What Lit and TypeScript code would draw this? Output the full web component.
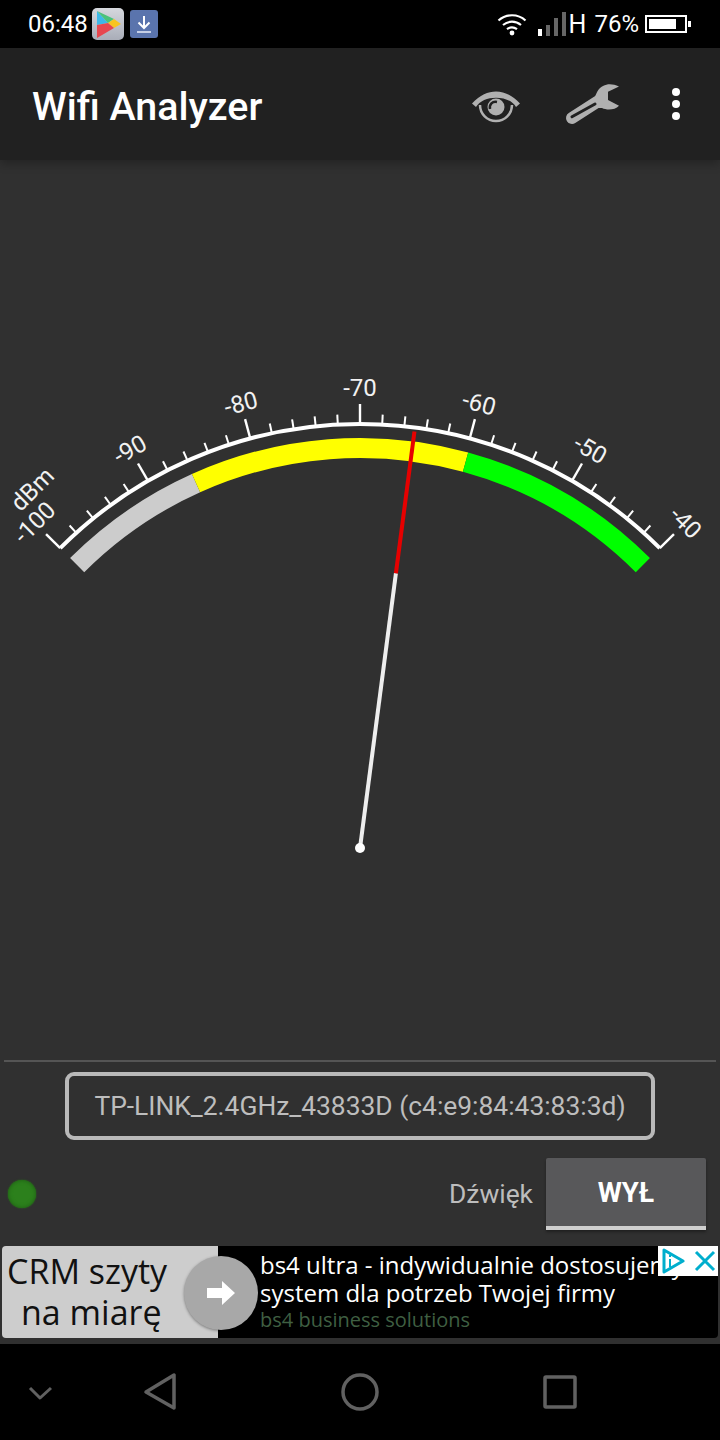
import { LitElement, html, css, svg } from "lit";
import { customElement } from "lit/decorators.js";

const CX = 360;
const CY = 848;

// polar point, deg is measured from straight up, clockwise
function pt(r: number, deg: number) {
  const a = (deg * Math.PI) / 180;
  return { x: CX + r * Math.sin(a), y: CY - r * Math.cos(a) };
}

function band(r: number, width: number, from: number, to: number, color: string) {
  const a = pt(r, from);
  const b = pt(r, to);
  return svg`<path d="M${a.x} ${a.y}A${r} ${r} 0 0 1 ${b.x} ${b.y}" fill="none" stroke=${color} stroke-width=${width}></path>`;
}

@customElement("wifi-gauge")
export class WifiGauge extends LitElement {
  static styles = css`
    :host {
      display: block;
      flex: 1;
    }
    svg {
      display: block;
    }
    text {
      font-family: Roboto, sans-serif;
      font-size: 24px;
      fill: #f2f2f2;
    }
  `;

  render() {
    const ticks = [];
    for (let dbm = -100; dbm <= -40; dbm += 2) {
      const deg = (dbm + 70) * 1.5;
      const major = dbm % 10 === 0;
      const a = pt(424, deg);
      const b = pt(major ? 444 : 434, deg);
      ticks.push(
        svg`<line x1=${a.x} y1=${a.y} x2=${b.x} y2=${b.y} stroke="#fff" stroke-width=${major ? 2.4 : 2}></line>`
      );
    }
    const labels = [-100, -90, -80, -70, -60, -50, -40].map((dbm) => {
      const deg = (dbm + 70) * 1.5;
      const p = pt(452, deg);
      return svg`<text text-anchor="middle" transform="translate(${p.x} ${p.y}) rotate(${deg})">${dbm}</text>`;
    });
    const tip = pt(420, 7.45);
    const mid = pt(277, 7.45);
    return html`
      <svg width="720" height="900" viewBox="0 160 720 900">
        ${band(400, 20, -45, -24.2, "#cccccc")}
        ${band(400, 20, -24.2, 15.3, "#ffff00")}
        ${band(400, 20, 15.3, 45, "#00ff00")}
        ${band(424, 4, -45, 45, "#ffffff")}
        ${ticks}
        ${labels}
        <text text-anchor="middle" transform="translate(38 495) rotate(-45)">dBm</text>
        <line x1=${CX} y1=${CY} x2=${mid.x} y2=${mid.y} stroke="#eeeeee" stroke-width="4"></line>
        <line x1=${mid.x} y1=${mid.y} x2=${tip.x} y2=${tip.y} stroke="#e60000" stroke-width="4"></line>
        <circle cx=${CX} cy=${CY} r="5" fill="#fff"></circle>
      </svg>
    `;
  }
}

@customElement("app-root")
export class AppRoot extends LitElement {
  static styles = css`
    :host {
      display: flex;
      flex-direction: column;
      width: 720px;
      height: 1440px;
      background: #303030;
      font-family: Roboto, sans-serif;
      overflow: hidden;
    }
    .status {
      height: 48px;
      flex: none;
      background: #000;
      color: #fff;
      display: flex;
      align-items: center;
      justify-content: space-between;
      padding: 0 29px 0 28px;
      font-size: 24px;
    }
    .status-group {
      display: flex;
      align-items: center;
    }
    .status svg {
      display: block;
    }
    .play {
      margin-left: 4px;
    }
    .dl {
      margin-left: 5px;
    }
    .signal {
      margin-left: 11px;
    }
    .net {
      margin-left: 3px;
      font-size: 25px;
    }
    .pct {
      margin-left: 8px;
    }
    .batt {
      margin-left: 6px;
    }
    .toolbar {
      height: 112px;
      flex: none;
      background: #212121;
      box-shadow: 0 3px 10px rgba(0, 0, 0, 0.3);
      position: relative;
      display: flex;
      align-items: center;
      justify-content: space-between;
      padding: 0 0 6px 32px;
      box-sizing: border-box;
    }
    .title {
      color: #fff;
      font-size: 39.4px;
      font-weight: 500;
      margin-top: 10px;
    }
    .toolbar svg {
      display: block;
    }
    .divider {
      height: 2px;
      flex: none;
      background: #555;
      margin: 0 4px;
    }
    .network {
      flex: none;
      height: 68px;
      box-sizing: border-box;
      margin: 10px 65px 0;
      border: 4px solid #b9b9b9;
      border-radius: 9px;
      display: flex;
      align-items: center;
      justify-content: center;
      color: #bdbdbd;
      font-size: 26.4px;
    }
    .controls {
      flex: none;
      height: 72px;
      margin-top: 18px;
      padding: 0 14px 0 8px;
      display: flex;
      align-items: center;
    }
    .led {
      width: 28px;
      height: 28px;
      border-radius: 50%;
      background: #2c801c;
      box-shadow: inset 0 0 4px #1d5c14, 0 0 2px #2a6e1c;
    }
    .sound {
      margin-left: auto;
      margin-right: 13px;
      color: #bdbdbd;
      font-size: 26.4px;
    }
    .toggle {
      width: 160px;
      height: 72px;
      box-sizing: border-box;
      background: #58585a;
      border-bottom: 4px solid #cfcfcf;
      border-radius: 2px 2px 0 0;
      color: #fff;
      font-size: 27.5px;
      font-weight: 700;
      display: flex;
      align-items: center;
      justify-content: center;
      box-shadow: 0 2px 3px rgba(0, 0, 0, 0.35);
    }
    .ad {
      flex: none;
      height: 92px;
      margin: 16px 2px 0;
      display: flex;
      position: relative;
      font-family: "Open Sans", sans-serif;
    }
    .ad-left {
      width: 216px;
      box-sizing: border-box;
      background: #cdcdcd;
      color: #111;
      border-radius: 4px 0 0 4px;
      font-size: 34px;
      line-height: 41px;
      text-align: left;
      padding: 5px 0 0 5px;
    }
    .ad-left div + div {
      padding-left: 14px;
    }
    .ad-right {
      flex: 1;
      background: #000;
      color: #fff;
      border-radius: 0 0 4px 0;
      padding: 5px 0 0 42px;
      font-size: 24px;
      line-height: 28px;
      white-space: nowrap;
      overflow: hidden;
    }
    .ad-source {
      color: #3f5f42;
      font-size: 20px;
      line-height: 26px;
    }
    .ad-go {
      position: absolute;
      left: 182px;
      top: 10px;
      width: 74px;
      height: 74px;
      border-radius: 50%;
      background: #a8a8a8;
      box-shadow: 0 1px 3px rgba(0, 0, 0, 0.4);
      display: flex;
      align-items: center;
      justify-content: center;
    }
    .ad-choices {
      position: absolute;
      right: 0;
      top: 0;
      width: 60px;
      height: 30px;
      background: #fff;
    }
    svg {
      display: block;
    }
    .strip {
      flex: none;
      height: 6px;
    }
    .nav {
      flex: 1;
      background: #000;
    }
  `;

  render() {
    return html`
      <div class="status">
        <div class="status-group">
          <span>06:48</span>
          <svg class="play" width="33" height="33" viewBox="0 0 33 33">
            <defs>
              <linearGradient id="pg" x1="0" y1="0" x2="0" y2="1">
                <stop offset="0" stop-color="#d6d8de"></stop>
                <stop offset="1" stop-color="#a9adb8"></stop>
              </linearGradient>
            </defs>
            <rect width="32" height="32" rx="5" fill="url(#pg)"></rect>
            <polygon points="5,3 5,17 16,15" fill="#3db8e8"></polygon>
            <polygon points="5,3 16,15 22,11" fill="#4ac27a"></polygon>
            <polygon points="22,11 16,15 22,20 29,16" fill="#f8c420"></polygon>
            <polygon points="5,17 5,30 22,20 16,15" fill="#e8474f"></polygon>
          </svg>
          <svg class="dl" width="28" height="28" viewBox="0 0 28 28">
            <rect width="28" height="28" rx="3" fill="#5a74ad"></rect>
            <path d="M14 6V18M8.5 12.5L14 18L19.5 12.5" fill="none" stroke="#fff" stroke-width="2"></path>
            <path d="M7 22H21" stroke="#c5cfe6" stroke-width="2"></path>
          </svg>
        </div>
        <div class="status-group">
          <svg width="30" height="24" viewBox="0 0 30 24">
            <path d="M1.5 8.5C9 1.5 21 1.5 28.5 8.500M6 13C11.500 8.500 18.500 8.500 24 13M10 17.200C13 15 17 15 20 17.200" fill="none" stroke="#fff" stroke-width="2.200"></path>
            <circle cx="15" cy="21" r="2.400" fill="#fff"></circle>
          </svg>
          <svg class="signal" width="28" height="24" viewBox="0 0 28 24">
            <rect x="0" y="17" width="4" height="7" fill="#fff"></rect>
            <rect x="8" y="13" width="4" height="11" fill="#666"></rect>
            <rect x="16" y="6" width="4" height="18" fill="#666"></rect>
            <rect x="24" y="0" width="4" height="24" fill="#666"></rect>
          </svg>
          <span class="net">H</span>
          <span class="pct">76%</span>
          <svg class="batt" width="46" height="18" viewBox="0 0 46 18">
            <rect x="1" y="1" width="40" height="16" fill="none" stroke="#fff" stroke-width="2"></rect>
            <rect x="4" y="4" width="27" height="10" fill="#fff"></rect>
            <rect x="43" y="6" width="3" height="6" fill="#fff"></rect>
          </svg>
        </div>
      </div>
      <div class="toolbar">
        <span class="title">Wifi Analyzer</span>
        <svg width="260" height="106" viewBox="460 48 260 106">
          <path d="M472 103.500C480 95 488 91.500 496 91.500C504 91.500 512 95 520 103.500L516 107C509 94.500 483 94.500 476 107Z" fill="#b0b0b0"></path>
          <path d="M480 105A15.500 15.500 0 0 0 512 105" fill="none" stroke="#b0b0b0" stroke-width="2.500"></path>
          <circle cx="496" cy="107" r="8.500" fill="#b0b0b0"></circle>
          <path d="M490 109C489 104.500 492.500 101 497 102" fill="none" stroke="#212121" stroke-width="2.500"></path>
          <path d="M572 118L600 100" stroke="#b0b0b0" stroke-width="12" stroke-linecap="round"></path>
          <path d="M594 100C596 94 598 88 603 86C608 83.500 613 84 619 86.500L608 91.700L608 100L619 105.700C615 110 607 110.500 602 108L596 108Z" fill="#b0b0b0"></path>
          <path d="M572 116.700L595 104" stroke="#212121" stroke-width="3" stroke-linecap="round"></path>
          <circle cx="676" cy="92" r="4" fill="#fff"></circle>
          <circle cx="676" cy="104" r="4" fill="#fff"></circle>
          <circle cx="676" cy="116" r="4" fill="#fff"></circle>
        </svg>
      </div>
      <wifi-gauge></wifi-gauge>
      <div class="divider"></div>
      <div class="network">TP-LINK_2.4GHz_43833D (c4:e9:84:43:83:3d)</div>
      <div class="controls">
        <div class="led"></div>
        <span class="sound">Dźwięk</span>
        <div class="toggle">WYŁ</div>
      </div>
      <div class="ad">
        <div class="ad-left">
          <div>CRM szyty</div>
          <div>na miarę</div>
        </div>
        <div class="ad-right">
          <div>bs4 ultra - indywidualnie dostosujemy</div>
          <div>system dla potrzeb Twojej firmy</div>
          <div class="ad-source">bs4 business solutions</div>
        </div>
        <div class="ad-go">
          <svg width="28" height="24" viewBox="0 0 28 24">
            <path d="M0 7H15V0L28 12L15 24V17H0Z" fill="#fff"></path>
          </svg>
        </div>
        <div class="ad-choices">
          <svg width="60" height="30" viewBox="0 0 60 30">
            <path d="M6 4V26L25 15Z" fill="none" stroke="#00aecd" stroke-width="3" stroke-linejoin="round"></path>
            <path d="M12 13V21M12 9V11" stroke="#00aecd" stroke-width="2"></path>
            <path d="M38 6L56 24M56 6L38 24" stroke="#00aecd" stroke-width="3"></path>
          </svg>
        </div>
      </div>
      <div class="strip"></div>
      <div class="nav">
        <svg width="720" height="96" viewBox="0 1344 720 96" fill="none" stroke="#616161" stroke-width="3.500" stroke-linejoin="round">
          <path d="M30 1388L40 1398L51 1388" stroke-width="3"></path>
          <path d="M174 1375V1408L146 1392Z"></path>
          <circle cx="360" cy="1392" r="17"></circle>
          <rect x="545" y="1377" width="30" height="30" rx="1"></rect>
        </svg>
      </div>
    `;
  }
}
